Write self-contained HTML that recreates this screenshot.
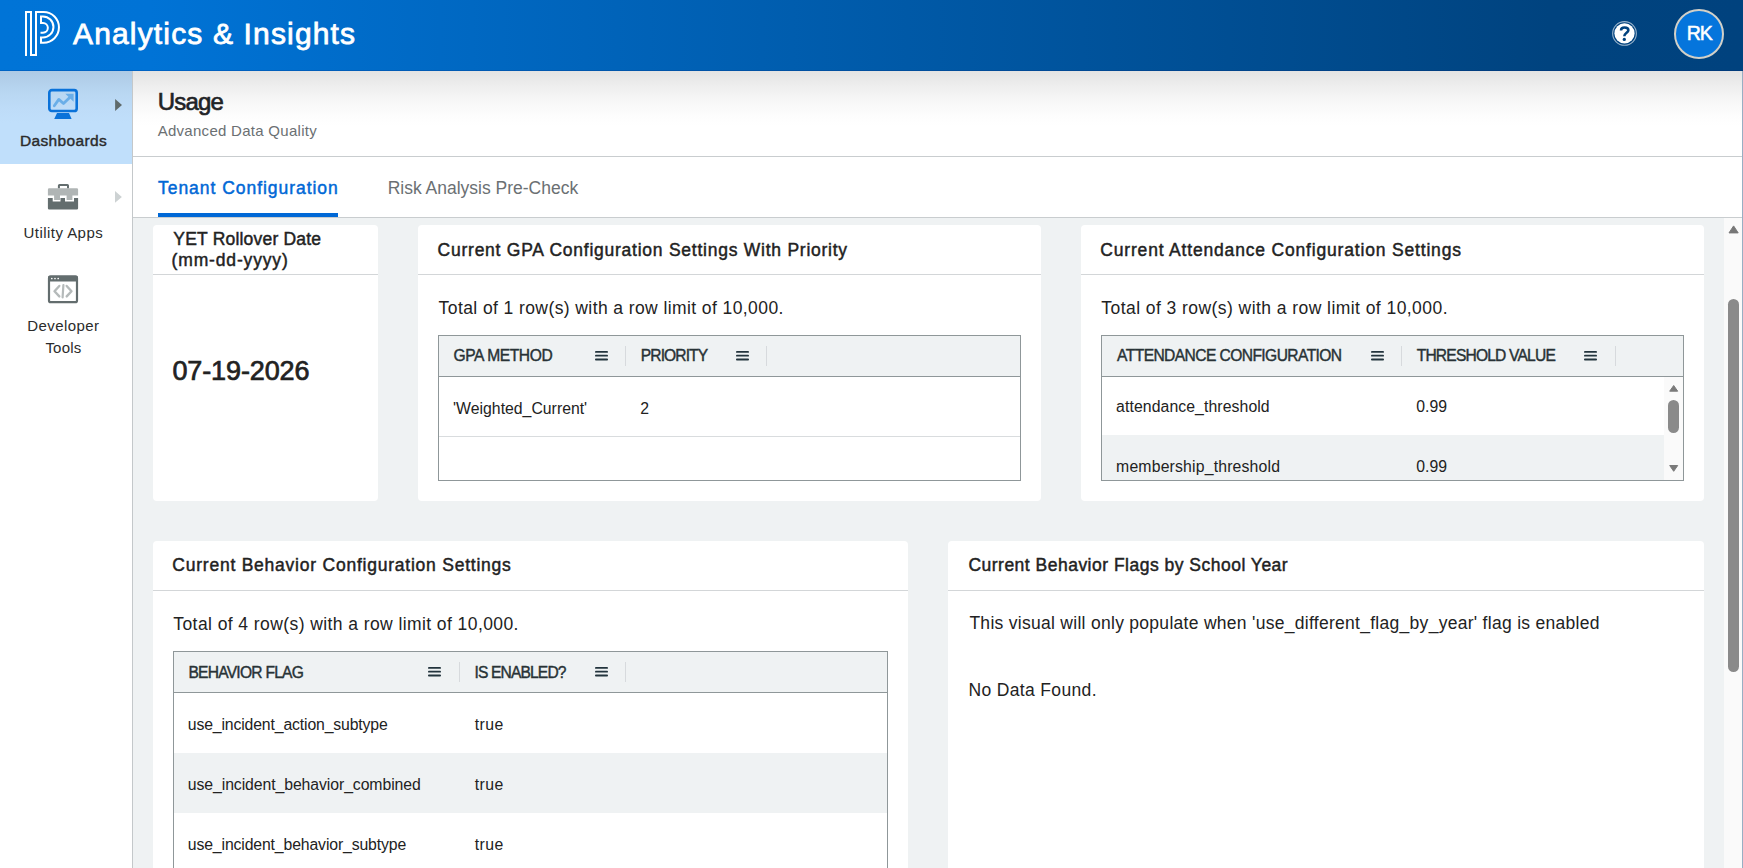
<!DOCTYPE html>
<html><head><meta charset="utf-8">
<style>
*{margin:0;padding:0;box-sizing:border-box}
html,body{width:1743px;height:868px;overflow:hidden;background:#fff;font-family:"Liberation Sans",sans-serif;color:#222}
.a{position:absolute;white-space:pre;line-height:1}
.b{position:absolute}
.card{position:absolute;background:#fff;border-radius:4px}
.csep{position:absolute;height:1px;background:#d3d6d8}
.tbl{position:absolute;border:1px solid #8f9799;background:#fff;overflow:hidden}
.th{position:absolute;left:0;top:0;right:0;height:41px;background:#eff2f3;border-bottom:1px solid #8f9799}
.dv{position:absolute;width:1px;height:20px;background:#d7dadd}
.mn{position:absolute;width:13px;height:10px}
</style></head><body>
<!-- header -->
<div class="b" style="left:0;top:0;width:1743px;height:71px;background:linear-gradient(to right,#0074d7 0,#0073d6 8.6%,#00437f 88.9%,#00427e 100%)"></div>
<div class="b" style="left:0;top:70px;width:1743px;height:1px;background:rgba(0,30,110,.18)"></div>
<svg class="b" style="left:0;top:0" width="70" height="70" viewBox="0 0 70 70">
<path d="M26,56 V12 H31 V55 H36 V12 H43.6 A15.35,15.35 0 0 1 43.6,42.7 H41 V37.5 H42.9 A10.55,10.55 0 0 0 42.9,16.4 H41 V23 H43 A4.85,4.85 0 0 1 43,32.7 H40.5" fill="none" stroke="#fff" stroke-width="2"/>
</svg>
<svg class="b" style="left:1608px;top:17px" width="34" height="34" viewBox="0 0 34 34">
<circle cx="16.5" cy="16.45" r="11.85" fill="none" stroke="rgba(255,255,255,.6)" stroke-width="1.1"/>
<circle cx="16.5" cy="16.45" r="10.1" fill="#fff"/>
<path d="M13,13.4 C13,11.3 14.6,10.45 16.6,10.45 C18.7,10.45 20.4,11.5 20.4,13.3 C20.4,15.6 16.3,16.1 16.3,19.3" fill="none" stroke="#00427e" stroke-width="2.5"/>
<circle cx="16.3" cy="22.4" r="1.65" fill="#00427e"/>
</svg>
<div class="b" style="left:1674px;top:9px;width:50px;height:50px;border-radius:50%;background:#0575dc;border:2px solid #d2d0c8"></div>

<!-- sidebar -->
<div class="b" style="left:0;top:71px;width:132px;height:797px;background:#fff"></div>
<div class="b" style="left:0;top:71px;width:132px;height:93px;background:linear-gradient(to bottom,#aecae5 0,#b9d7f2 22px,#bedcf8 38px,#c0dffb 52px)"></div>
<div class="b" style="left:132px;top:71px;width:1px;height:797px;background:#c4c8ca"></div>
<svg class="b" style="left:46px;top:87px" width="34" height="34" viewBox="0 0 34 34">
<rect x="3.3" y="3.1" width="27.4" height="20.9" rx="2.6" fill="none" stroke="#0a72d9" stroke-width="2.6"/>
<path d="M8.3,18.8 L12.8,12.4 L17.5,16.5 L24.8,9.6" fill="none" stroke="#6aaee8" stroke-width="2.8" stroke-linecap="round" stroke-linejoin="round"/>
<path d="M19.3,6.8 H27.6 V14.7 Z" fill="#6aaee8"/>
<path d="M11,26 H23 L25.6,31.9 H8.2 Z" fill="#0a72d9"/>
</svg>
<svg class="b" style="left:113px;top:97px" width="12" height="16" viewBox="0 0 12 16"><path d="M2.1,1.9 L9,7.9 L2.1,13.9 Z" fill="#5f6a6b"/></svg>

<svg class="b" style="left:46px;top:182px" width="34" height="30" viewBox="0 0 34 30">
<path d="M11.9,6.5 V3.6 A1.6,1.6 0 0 1 13.5,2 H21.4 A1.6,1.6 0 0 1 23,3.6 V6.5 H21 V4 H13.9 V6.5 Z" fill="#636d6e"/>
<path d="M1.9,7.6 A1.3,1.3 0 0 1 3.2,6.3 H30.8 A1.3,1.3 0 0 1 32.1,7.6 V13.6 H26.4 V18 H20.6 V13.6 H14 V18 H8.1 V13.6 H1.9 Z" fill="#b0b5b5"/>
<path d="M1.9,16 H6.7 V19.6 H14.5 V16 H19 V19.6 H28 V16 H32.1 V26.2 A1.3,1.3 0 0 1 30.8,27.5 H3.2 A1.3,1.3 0 0 1 1.9,26.2 Z" fill="#636d6e"/>
</svg>
<svg class="b" style="left:113px;top:189px" width="12" height="16" viewBox="0 0 12 16"><path d="M2,2.1 L8.9,7.9 L2,13.8 Z" fill="#cdd2d3"/></svg>

<svg class="b" style="left:46px;top:273px" width="34" height="32" viewBox="0 0 34 32">
<rect x="3" y="3.5" width="28" height="25.7" rx="1.8" fill="none" stroke="#636d6e" stroke-width="2.2"/>
<rect x="2" y="2.4" width="30" height="6" rx="1.8" fill="#636d6e"/>
<circle cx="5.8" cy="5.5" r=".85" fill="#fff"/><circle cx="9" cy="5.5" r=".85" fill="#fff"/><circle cx="12.2" cy="5.5" r=".85" fill="#fff"/>
<path d="M13.3,13 L8.5,18.2 L13.3,23.4 M20.7,13 L25.5,18.2 L20.7,23.4" fill="none" stroke="#b5baba" stroke-width="2.4" stroke-linecap="round" stroke-linejoin="round"/>
<path d="M17.4,12 L16.6,24.4" fill="none" stroke="#b5baba" stroke-width="2.2" stroke-linecap="round"/>
</svg>

<!-- page header -->
<div class="b" style="left:133px;top:71px;width:1610px;height:85px;background:linear-gradient(to bottom,#e3e3e3 0,#eeeeee 15px,#f7f7f7 30px,#fdfdfd 45px,#fff 55px)"></div>
<div class="b" style="left:133px;top:156px;width:1610px;height:1px;background:#c9cdcf"></div>
<div class="b" style="left:133px;top:157px;width:1610px;height:60px;background:#fff"></div>
<div class="b" style="left:158px;top:213px;width:180px;height:4px;background:#0068d6"></div>
<div class="b" style="left:133px;top:217px;width:1610px;height:1px;background:#c9cdcf"></div>

<!-- content -->
<div class="b" style="left:133px;top:218px;width:1610px;height:650px;background:#eff2f3"></div>
<div class="b" style="left:1724px;top:218px;width:18px;height:650px;background:#fafafa"></div>
<div class="b" style="left:1742px;top:71px;width:1px;height:797px;background:#98aec3"></div>
<svg class="b" style="left:1724px;top:222px" width="18" height="14" viewBox="0 0 18 14"><path d="M5,10.9 L9.6,3.9 L14.2,10.9 Z" fill="#777" stroke="#777" stroke-width="1" stroke-linejoin="round"/></svg>
<div class="b" style="left:1728px;top:299px;width:11px;height:373px;border-radius:5.5px;background:#8a8a8a"></div>

<!-- card 1 -->
<div class="card" style="left:153px;top:225px;width:225px;height:276px"></div>
<div class="csep" style="left:153px;top:274px;width:225px"></div>

<!-- card 2 GPA -->
<div class="card" style="left:418px;top:225px;width:623px;height:276px"></div>
<div class="csep" style="left:418px;top:274px;width:623px"></div>
<div class="tbl" style="left:438px;top:335px;width:583px;height:146px">
 <div class="th"></div>
 <div class="b" style="left:0;right:0;top:100px;height:1px;background:#d9dcde"></div>
</div>
<div class="dv" style="left:625px;top:346px"></div>
<div class="dv" style="left:766px;top:346px"></div>

<!-- card 3 attendance -->
<div class="card" style="left:1081px;top:225px;width:623px;height:276px"></div>
<div class="csep" style="left:1081px;top:274px;width:623px"></div>
<div class="tbl" style="left:1101px;top:335px;width:583px;height:146px">
 <div class="th"></div>
 <div class="b" style="left:0;width:562px;top:99px;height:46px;background:#eff2f3"></div>
</div>
<div class="dv" style="left:1401px;top:346px"></div>
<div class="dv" style="left:1615px;top:346px"></div>
<div class="b" style="left:1664px;top:377px;width:19px;height:103px;background:#fafafa"></div>
<svg class="b" style="left:1665px;top:382px" width="18" height="14" viewBox="0 0 18 14"><path d="M4.7,9.2 L8.7,3.5 L12.7,9.2 Z" fill="#7a7a7a" stroke="#7a7a7a" stroke-width="1" stroke-linejoin="round"/></svg>
<div class="b" style="left:1668px;top:400px;width:11px;height:33px;border-radius:5.5px;background:#8a8a8a"></div>
<svg class="b" style="left:1665px;top:461px" width="18" height="14" viewBox="0 0 18 14"><path d="M4.7,4.5 L8.7,10.3 L12.7,4.5 Z" fill="#7a7a7a" stroke="#7a7a7a" stroke-width="1" stroke-linejoin="round"/></svg>

<!-- card 4 behavior -->
<div class="card" style="left:153px;top:541px;width:755px;height:340px"></div>
<div class="csep" style="left:153px;top:590px;width:755px"></div>
<div class="tbl" style="left:173px;top:651px;width:715px;height:240px">
 <div class="th"></div>
 <div class="b" style="left:0;right:0;top:101px;height:60px;background:#eff2f3"></div>
</div>
<div class="dv" style="left:459px;top:662px"></div>
<div class="dv" style="left:625px;top:662px"></div>

<!-- card 5 flags -->
<div class="card" style="left:948px;top:541px;width:756px;height:340px"></div>
<div class="csep" style="left:948px;top:590px;width:756px"></div>

<!-- menu icons -->
<svg class="b" style="left:594.8px;top:351px" width="13" height="10" viewBox="0 0 13 10"><g fill="#23343d"><rect x="0" y="0" width="13" height="1.8" rx=".9"/><rect x="0" y="3.8" width="13" height="1.8" rx=".9"/><rect x="0" y="7.6" width="13" height="1.8" rx=".9"/></g></svg>
<svg class="b" style="left:735.6px;top:351px" width="13" height="10" viewBox="0 0 13 10"><g fill="#23343d"><rect x="0" y="0" width="13" height="1.8" rx=".9"/><rect x="0" y="3.8" width="13" height="1.8" rx=".9"/><rect x="0" y="7.6" width="13" height="1.8" rx=".9"/></g></svg>
<svg class="b" style="left:1370.6px;top:351px" width="13" height="10" viewBox="0 0 13 10"><g fill="#23343d"><rect x="0" y="0" width="13" height="1.8" rx=".9"/><rect x="0" y="3.8" width="13" height="1.8" rx=".9"/><rect x="0" y="7.6" width="13" height="1.8" rx=".9"/></g></svg>
<svg class="b" style="left:1584.4px;top:351px" width="13" height="10" viewBox="0 0 13 10"><g fill="#23343d"><rect x="0" y="0" width="13" height="1.8" rx=".9"/><rect x="0" y="3.8" width="13" height="1.8" rx=".9"/><rect x="0" y="7.6" width="13" height="1.8" rx=".9"/></g></svg>
<svg class="b" style="left:428.4px;top:667px" width="13" height="10" viewBox="0 0 13 10"><g fill="#23343d"><rect x="0" y="0" width="13" height="1.8" rx=".9"/><rect x="0" y="3.8" width="13" height="1.8" rx=".9"/><rect x="0" y="7.6" width="13" height="1.8" rx=".9"/></g></svg>
<svg class="b" style="left:594.6px;top:667px" width="13" height="10" viewBox="0 0 13 10"><g fill="#23343d"><rect x="0" y="0" width="13" height="1.8" rx=".9"/><rect x="0" y="3.8" width="13" height="1.8" rx=".9"/><rect x="0" y="7.6" width="13" height="1.8" rx=".9"/></g></svg>

<div class="a" id="t_app" style="left:73.00px;top:19.26px;font-size:30px;font-weight:400;-webkit-text-stroke:0.78px #fff;letter-spacing:1.158px;color:#fff">Analytics &amp; Insights</div>
<div class="a" id="t_rk" style="left:1686.80px;top:24.14px;font-size:19.5px;font-weight:400;-webkit-text-stroke:0.507px #fff;letter-spacing:-1.2px;color:#fff">RK</div>
<div class="a" id="t_dash" style="left:19.90px;top:133.33px;font-size:15.5px;font-weight:400;-webkit-text-stroke:0.403px #2b2b2b;letter-spacing:0.356px;color:#2b2b2b">Dashboards</div>
<div class="a" id="t_util" style="left:23.50px;top:224.85px;font-size:15px;font-weight:400;letter-spacing:0.455px;color:#2b2b2b">Utility Apps</div>
<div class="a" id="t_dev" style="left:27.20px;top:317.75px;font-size:15px;font-weight:400;letter-spacing:0.425px;color:#2b2b2b">Developer</div>
<div class="a" id="t_tools" style="left:45.40px;top:340.45px;font-size:15px;font-weight:400;letter-spacing:0.225px;color:#2b2b2b">Tools</div>
<div class="a" id="t_usage" style="left:157.80px;top:90.23px;font-size:24px;font-weight:400;-webkit-text-stroke:0.624px #1f2326;letter-spacing:-0.825px;color:#1f2326">Usage</div>
<div class="a" id="t_adq" style="left:157.70px;top:122.85px;font-size:15px;font-weight:400;letter-spacing:0.28px;color:#6b7073">Advanced Data Quality</div>
<div class="a" id="t_tab1" style="left:158.00px;top:179.74px;font-size:17.5px;font-weight:400;-webkit-text-stroke:0.455px #0068d6;letter-spacing:0.963px;color:#0068d6">Tenant Configuration</div>
<div class="a" id="t_tab2" style="left:387.70px;top:179.74px;font-size:17.5px;font-weight:400;letter-spacing:-0.005px;color:#6b7073">Risk Analysis Pre-Check</div>
<div class="a" id="t_yet1" style="left:173.30px;top:230.54px;font-size:17.5px;font-weight:400;-webkit-text-stroke:0.455px #222;letter-spacing:0.2px;color:#222">YET Rollover Date</div>
<div class="a" id="t_yet2" style="left:171.60px;top:251.54px;font-size:17.5px;font-weight:400;-webkit-text-stroke:0.455px #222;letter-spacing:0.836px;color:#222">(mm-dd-yyyy)</div>
<div class="a" id="t_date" style="left:172.40px;top:357.69px;font-size:27px;font-weight:400;-webkit-text-stroke:0.702px #222;letter-spacing:-0.111px;color:#222">07-19-2026</div>
<div class="a" id="t_gpa" style="left:437.60px;top:241.74px;font-size:17.5px;font-weight:400;-webkit-text-stroke:0.455px #222;letter-spacing:0.753px;color:#222">Current GPA Configuration Settings With Priority</div>
<div class="a" id="t_tot1" style="left:438.60px;top:299.74px;font-size:17.5px;font-weight:400;letter-spacing:0.409px;color:#222">Total of 1 row(s) with a row limit of 10,000.</div>
<div class="a" id="t_h1" style="left:453.50px;top:347.64px;font-size:15.6px;font-weight:400;-webkit-text-stroke:0.406px #283236;letter-spacing:-0.4px;color:#283236">GPA METHOD</div>
<div class="a" id="t_h2" style="left:640.80px;top:347.64px;font-size:15.6px;font-weight:400;-webkit-text-stroke:0.406px #283236;letter-spacing:-0.9px;color:#283236">PRIORITY</div>
<div class="a" id="t_c1" style="left:453.10px;top:401.08px;font-size:15.8px;font-weight:400;letter-spacing:0.006px;color:#222">'Weighted_Current'</div>
<div class="a" id="t_c2" style="left:640.20px;top:401.08px;font-size:15.8px;font-weight:400;letter-spacing:0px;color:#222">2</div>
<div class="a" id="t_att" style="left:1100.30px;top:241.74px;font-size:17.5px;font-weight:400;-webkit-text-stroke:0.455px #222;letter-spacing:0.82px;color:#222">Current Attendance Configuration Settings</div>
<div class="a" id="t_tot3" style="left:1101.30px;top:299.74px;font-size:17.5px;font-weight:400;letter-spacing:0.441px;color:#222">Total of 3 row(s) with a row limit of 10,000.</div>
<div class="a" id="t_h3" style="left:1117.10px;top:347.64px;font-size:15.6px;font-weight:400;-webkit-text-stroke:0.406px #283236;letter-spacing:-0.587px;color:#283236">ATTENDANCE CONFIGURATION</div>
<div class="a" id="t_h4" style="left:1416.70px;top:347.64px;font-size:15.6px;font-weight:400;-webkit-text-stroke:0.406px #283236;letter-spacing:-0.814px;color:#283236">THRESHOLD VALUE</div>
<div class="a" id="t_c3" style="left:1116.10px;top:399.48px;font-size:15.8px;font-weight:400;letter-spacing:0.084px;color:#222">attendance_threshold</div>
<div class="a" id="t_c4" style="left:1416.30px;top:399.48px;font-size:15.8px;font-weight:400;letter-spacing:0.033px;color:#222">0.99</div>
<div class="a" id="t_c5" style="left:1116.10px;top:459.38px;font-size:15.8px;font-weight:400;letter-spacing:0.168px;color:#222">membership_threshold</div>
<div class="a" id="t_c6" style="left:1416.30px;top:459.38px;font-size:15.8px;font-weight:400;letter-spacing:0.033px;color:#222">0.99</div>
<div class="a" id="t_beh" style="left:172.30px;top:557.44px;font-size:17.5px;font-weight:400;-webkit-text-stroke:0.455px #222;letter-spacing:0.768px;color:#222">Current Behavior Configuration Settings</div>
<div class="a" id="t_tot4" style="left:173.30px;top:615.64px;font-size:17.5px;font-weight:400;letter-spacing:0.418px;color:#222">Total of 4 row(s) with a row limit of 10,000.</div>
<div class="a" id="t_h5" style="left:188.40px;top:664.54px;font-size:15.6px;font-weight:400;-webkit-text-stroke:0.406px #283236;letter-spacing:-0.75px;color:#283236">BEHAVIOR FLAG</div>
<div class="a" id="t_h6" style="left:474.40px;top:664.54px;font-size:15.6px;font-weight:400;-webkit-text-stroke:0.406px #283236;letter-spacing:-0.84px;color:#283236">IS ENABLED?</div>
<div class="a" id="t_c7" style="left:187.80px;top:717.08px;font-size:15.8px;font-weight:400;letter-spacing:-0.146px;color:#222">use_incident_action_subtype</div>
<div class="a" id="t_c8" style="left:474.80px;top:717.08px;font-size:15.8px;font-weight:400;letter-spacing:0.433px;color:#222">true</div>
<div class="a" id="t_c9" style="left:187.80px;top:776.88px;font-size:15.8px;font-weight:400;letter-spacing:-0.083px;color:#222">use_incident_behavior_combined</div>
<div class="a" id="t_c10" style="left:474.80px;top:776.88px;font-size:15.8px;font-weight:400;letter-spacing:0.433px;color:#222">true</div>
<div class="a" id="t_c11" style="left:187.80px;top:836.78px;font-size:15.8px;font-weight:400;letter-spacing:-0.136px;color:#222">use_incident_behavior_subtype</div>
<div class="a" id="t_c12" style="left:474.80px;top:836.78px;font-size:15.8px;font-weight:400;letter-spacing:0.433px;color:#222">true</div>
<div class="a" id="t_flg" style="left:968.40px;top:557.24px;font-size:17.5px;font-weight:400;-webkit-text-stroke:0.455px #222;letter-spacing:0.492px;color:#222">Current Behavior Flags by School Year</div>
<div class="a" id="t_vis" style="left:969.40px;top:615.34px;font-size:17.5px;font-weight:400;letter-spacing:0.285px;color:#222">This visual will only populate when 'use_different_flag_by_year' flag is enabled</div>
<div class="a" id="t_nod" style="left:968.40px;top:681.64px;font-size:17.5px;font-weight:400;letter-spacing:0.354px;color:#222">No Data Found.</div>
</body></html>
